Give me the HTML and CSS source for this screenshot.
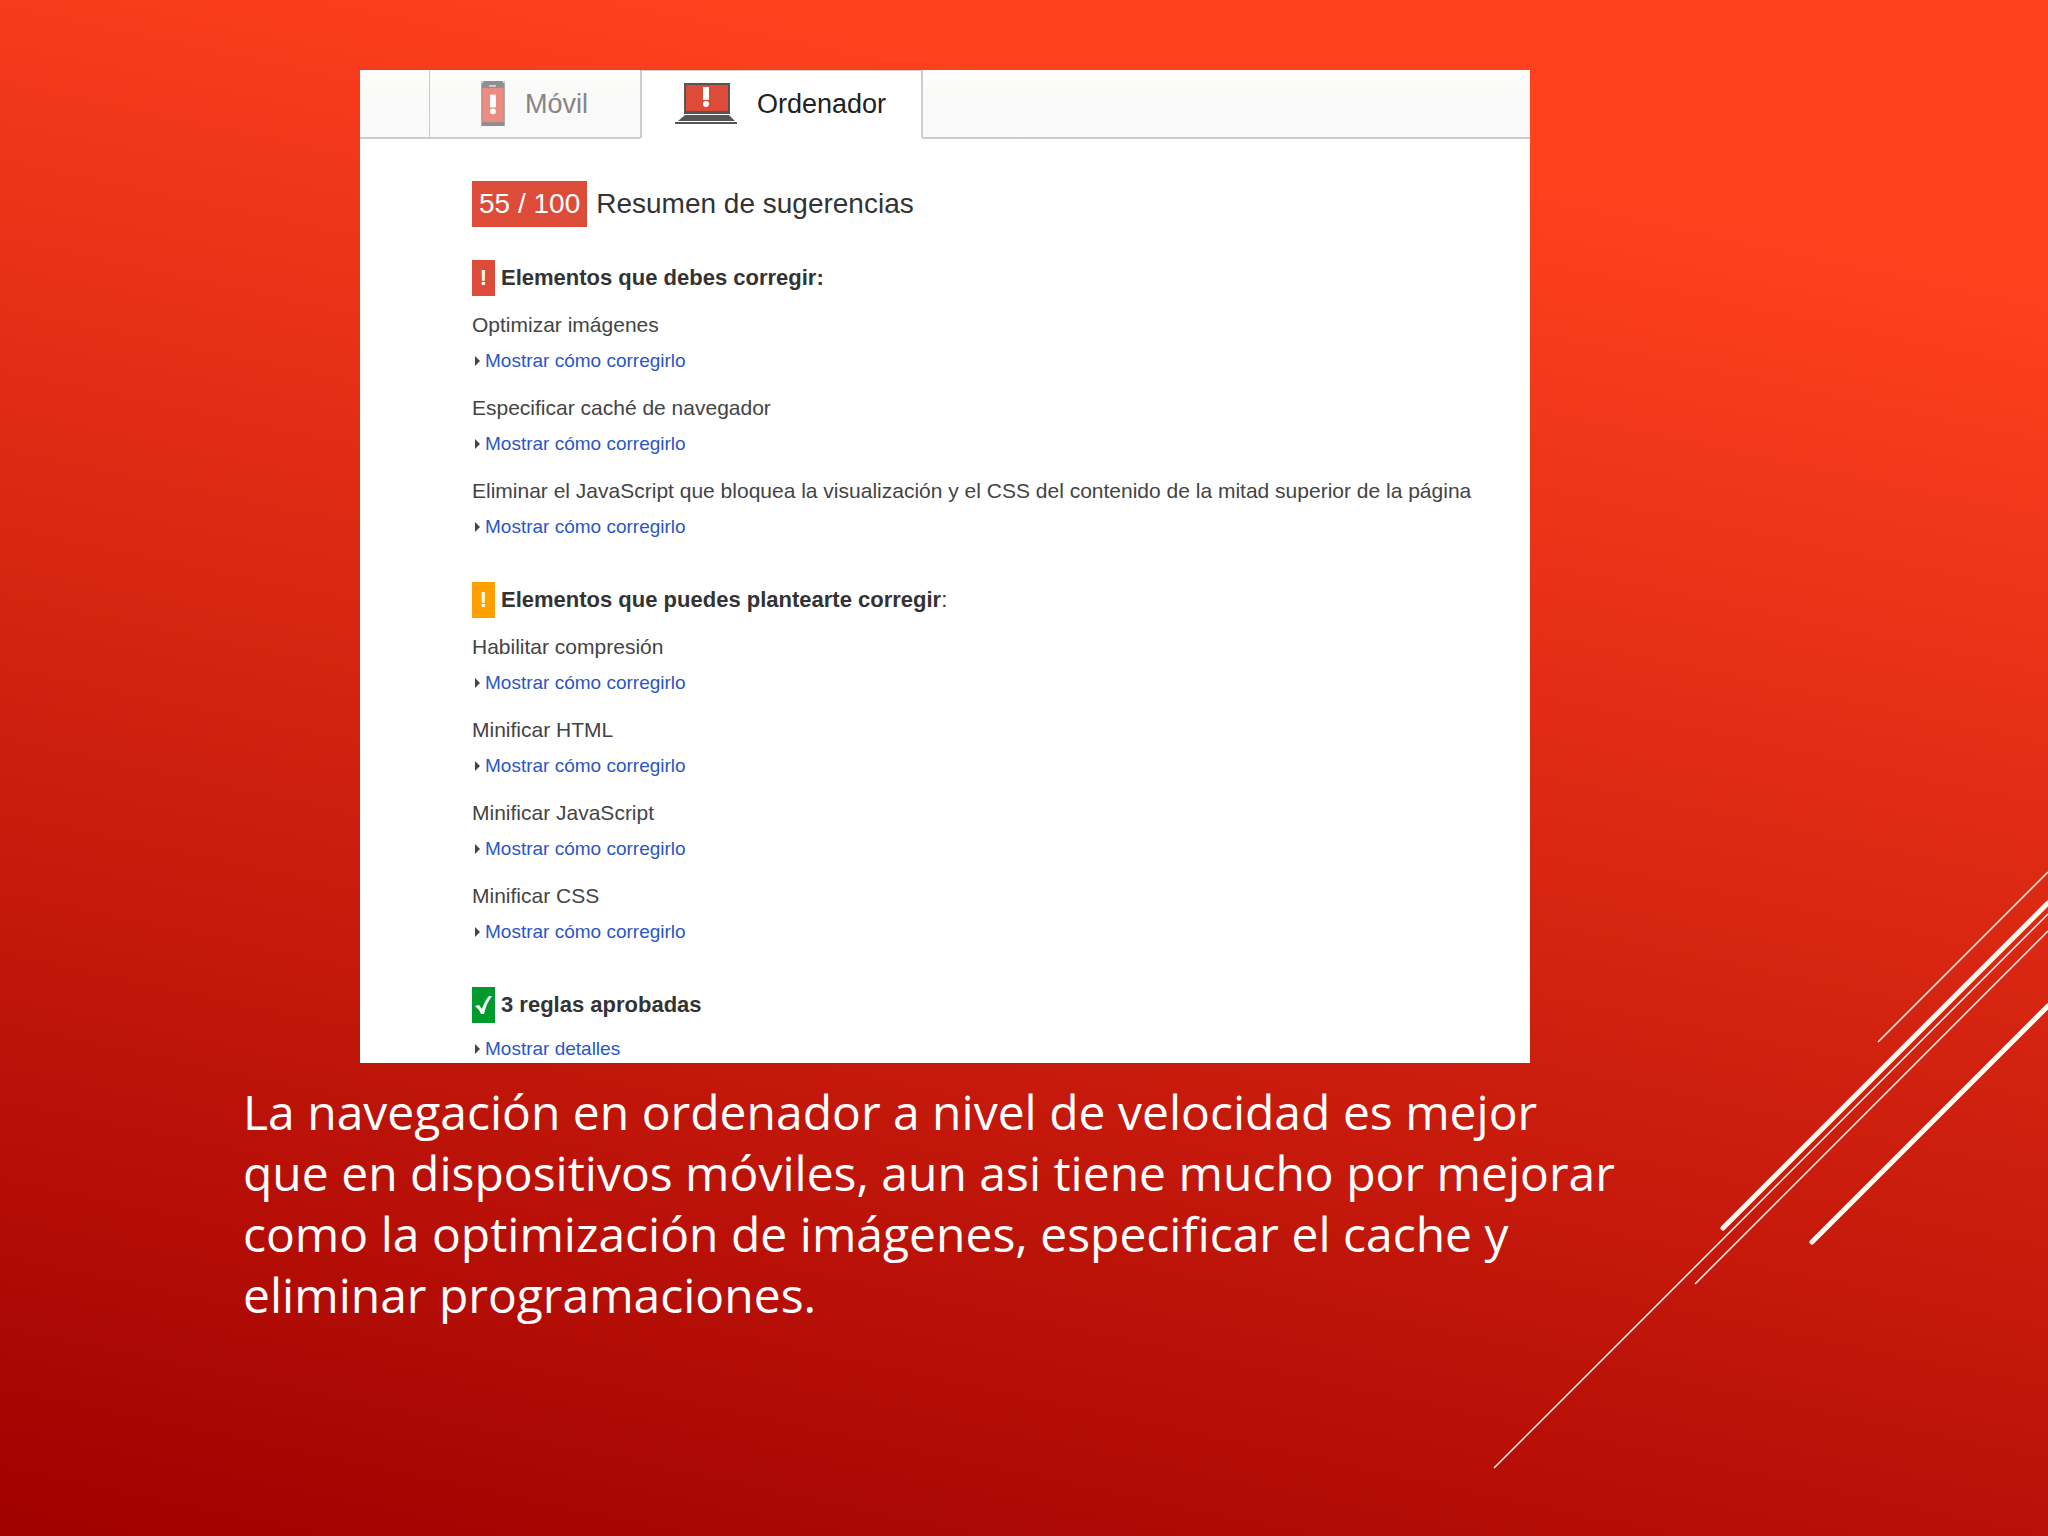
FILE: index.html
```html
<!DOCTYPE html>
<html lang="es">
<head>
<meta charset="utf-8">
<title>Velocidad en ordenador</title>
<link rel="stylesheet" href="styles.css">
</head>
<body>
<main class="slide">
  <svg class="lines" viewBox="0 0 568 620" fill="none" stroke="#fff3ea" aria-hidden="true">
    <path d="M398 182 568 12M14 608 568 54M215 424 568 71" stroke-width="1.5"/>
    <path d="M243 368 568 43M332 382 568 146" stroke="#fffaf2" stroke-width="5" stroke-linecap="round"/>
  </svg>

  <section class="report">
    <div class="tabs" role="tablist">
      <button class="tab" type="button" role="tab" aria-selected="false">
        <svg width="24" height="45" viewBox="0 0 24 46" aria-hidden="true">
          <path fill="#8f8f8f" d="M0 0h24v46H0z"/>
          <path fill="#ea8c82" d="M1 7h22v35H1z"/>
          <path fill="#d8d8d8" d="M8 4h7v2H8zM0 0h2v2H0zM22 0h2v2h-2z"/>
          <path fill="#fff" d="M9 14h6v13H9z"/>
          <circle cx="12" cy="31" r="3" fill="#fff"/>
        </svg>
        Móvil
      </button>
      <button class="tab active" type="button" role="tab" aria-selected="true">
        <svg width="62" height="42" viewBox="0 0 62 42" aria-hidden="true">
          <path fill="#555" d="M9 0h46v31H9z"/>
          <path fill="#dd4b39" d="M11 2h42v26H11z"/>
          <path fill="#fff" d="M28 4h6v13h-6z"/>
          <circle cx="31" cy="21" r="3" fill="#fff"/>
          <path fill="#555" d="M10 32h44l6 6H3zM0 39h62v2H0z"/>
        </svg>
        Ordenador
      </button>
    </div>

    <div class="results">
      <h1 class="score"><span class="points">55 / 100</span>Resumen de sugerencias</h1>

      <section class="group">
        <h2 class="group-title"><span class="badge must">!</span>Elementos que debes corregir:</h2>
        <ul class="rules">
          <li>Optimizar imágenes<a class="more" href="#">Mostrar cómo corregirlo</a></li>
          <li>Especificar caché de navegador<a class="more" href="#">Mostrar cómo corregirlo</a></li>
          <li>Eliminar el JavaScript que bloquea la visualización y el CSS del contenido de la mitad superior de la página<a class="more" href="#">Mostrar cómo corregirlo</a></li>
        </ul>
      </section>

      <section class="group">
        <h2 class="group-title"><span class="badge could">!</span><span>Elementos que puedes plantearte corregir<span class="light">:</span></span></h2>
        <ul class="rules">
          <li>Habilitar compresión<a class="more" href="#">Mostrar cómo corregirlo</a></li>
          <li>Minificar HTML<a class="more" href="#">Mostrar cómo corregirlo</a></li>
          <li>Minificar JavaScript<a class="more" href="#">Mostrar cómo corregirlo</a></li>
          <li>Minificar CSS<a class="more" href="#">Mostrar cómo corregirlo</a></li>
        </ul>
      </section>

      <section class="group">
        <h2 class="group-title"><span class="badge passed"><svg width="17" height="18" viewBox="0 0 17 18" aria-hidden="true"><path fill="#fff" d="M0 10l4-1 3 4Q10 4 14 0h3Q11 8 9 18H6Q4 13 0 10z"/></svg></span>3 reglas aprobadas</h2>
        <a class="more" href="#">Mostrar detalles</a>
      </section>
    </div>
  </section>

  <p class="caption">La navegación en ordenador a nivel de velocidad es mejor<br>
    que en dispositivos móviles, aun asi tiene mucho por mejorar<br>
    como la optimización de imágenes, especificar el cache y<br>
    eliminar programaciones.</p>
</main>
</body>
</html>
```
FILE: styles.css
```css
* {
  box-sizing: border-box;
}

body {
  margin: 0;
}

.slide {
  position: relative;
  display: grid;
  grid-template-columns: 243fr 117fr 1170fr 170fr 348fr;
  grid-template-rows: auto 1fr;
  min-height: 100vh;
  padding-top: 70px;
  overflow: hidden;
  background: linear-gradient(192deg, #ff411e 14%, #a00000 100%);
}

/* diagonal strokes at the right edge */
.lines {
  position: absolute;
  right: 0;
  bottom: 56px;
  width: 568px;
}

.report {
  grid-column: 3;
  min-width: 0;
  background: #fff;
  color: #333;
  font-family: "Liberation Sans", Arial, sans-serif;
  font-size: 21px;
}

.tabs {
  display: flex;
  height: 69px;
  padding-left: 69px;
  background: linear-gradient(#fdfefd, #fafaf9 30%, #faf9fb);
  box-shadow: inset 0 -2px #cbcbcd;
}

.tab {
  display: flex;
  align-items: center;
  gap: 20px;
  padding: 0 52px 0 51px;
  border: solid #ccc;
  border-width: 0 0 2px 1px;
  background: none;
  color: #858585;
  font: 27px/32px "Liberation Sans", Arial, sans-serif;
}

.tab.active {
  padding: 0 35px 0 33px;
  border-width: 1px 2px 2px;
  border-bottom-color: #fff;
  background: #fff;
  color: #222;
}

.results {
  padding: 42px 20px 0 112px;
}

.score {
  display: flex;
  gap: 9px;
  margin: 0 0 33px;
  font-size: 28px;
  font-weight: 400;
  line-height: 46px;
}

.points {
  padding: 0 7px;
  background: #dd4b39;
  color: #fff;
}

.group + .group {
  margin-top: 25px;
}

.group-title {
  display: flex;
  gap: 6px;
  margin: 0 0 12px;
  font-size: 22px;
  line-height: 36px;
}

.light {
  font-weight: 400;
}

.badge {
  display: flex;
  align-items: center;
  justify-content: center;
  width: 23px;
  height: 36px;
  color: #fff;
}

.must {
  background: #dd4b39;
}

.could {
  background: #ffa000;
}

.passed {
  background: #009a2d;
}

.rules {
  margin: 0;
  padding: 0;
  list-style: none;
}

.rules li {
  height: 83px;
  color: #444;
  line-height: 34px;
  white-space: nowrap;
}

.more {
  display: flex;
  align-items: center;
  gap: 5px;
  padding-left: 3px;
  color: #2a56c6;
  font-size: 19px;
  line-height: 28px;
  text-decoration: none;
}

.rules .more {
  margin-top: 5px;
}

.more::before {
  content: "";
  border: solid transparent;
  border-width: 5px 0 5px 5px;
  border-left-color: #444;
}

.caption {
  grid-column: 2 / 5;
  margin: 18px 0 0;
  color: #fff;
  font: 48px/61px "Open Sans", "Noto Sans", sans-serif;
  white-space: nowrap;
}
```
